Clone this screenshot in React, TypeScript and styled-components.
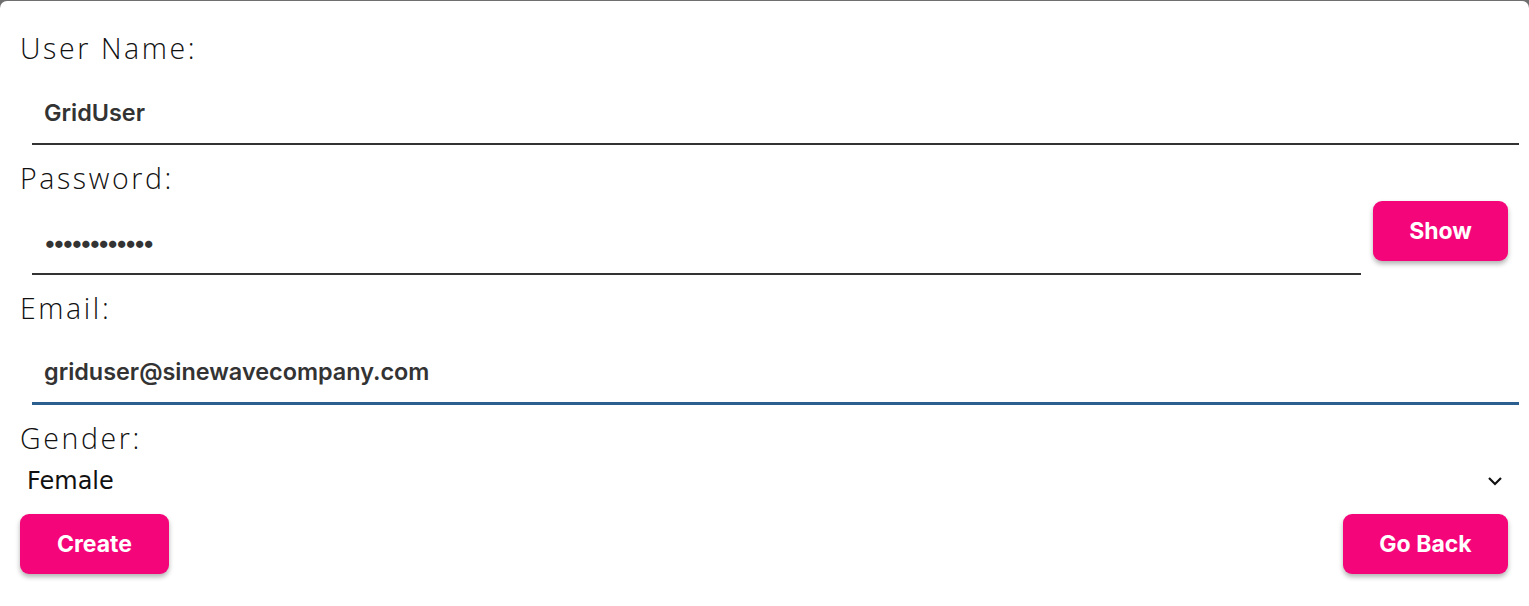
import React, { useState } from "react";
import { styled, createGlobalStyle } from "styled-components";

const GlobalStyle = createGlobalStyle`
  html, body {
    margin: 0;
    padding: 0;
    background: #6f6f6f;
  }
  #root {
    min-height: 100vh;
    display: flex;
    flex-direction: column;
  }
`;

const Card = styled.form`
  flex: 1;
  margin-top: 1px;
  background: #fff;
  border-radius: 7px 7px 0 0;
  padding: 28px 10px 0 20px;
  display: flex;
  flex-direction: column;
`;

const Field = styled.div`
  display: flex;
  flex-direction: column;
  height: 130px;
`;

const Label = styled.label`
  font-family: "Open Sans", sans-serif;
  font-weight: 300;
  font-size: 28.5px;
  line-height: 38px;
  letter-spacing: 2.6px;
  color: #111;
`;

const InputRow = styled.div`
  display: flex;
  align-items: flex-start;
  gap: 12px;
  margin-top: 8px;
`;

const TextInput = styled.input<{ $focused?: boolean; $secret?: boolean }>`
  flex: 1;
  min-width: 0;
  margin-left: 12px;
  height: 70px;
  box-sizing: border-box;
  padding: 6px 12px 0;
  border: none;
  border-bottom: ${({ $focused }) => ($focused ? "3px solid #2a5f8f" : "2px solid #333")};
  outline: none;
  background: transparent;
  font-family: Inter, sans-serif;
  font-weight: 600;
  font-size: 23.4px;
  letter-spacing: ${({ $secret }) => ($secret ? "-2.8px" : "0")};
  color: #333;
`;

const Button = styled.button<{ $width: number }>`
  background: #f5057a;
  color: #fff;
  border: none;
  border-radius: 9px;
  height: 60px;
  width: ${({ $width }) => $width}px;
  padding: 0;
  font-family: Inter, sans-serif;
  font-weight: 700;
  font-size: 23px;
  box-shadow: 0 3px 5px rgba(0, 0, 0, 0.3);
  cursor: pointer;
`;

const SideButton = styled(Button)`
  margin-top: -4px;
  margin-right: 11px;
`;

const SelectField = styled.div`
  display: flex;
  flex-direction: column;
`;

const SelectBox = styled.div`
  display: flex;
  align-items: center;
  justify-content: space-between;
  height: 40px;
  padding: 8px 16px 0 7px;
  box-sizing: border-box;
  font-family: "DejaVu Sans", sans-serif;
  font-size: 24px;
  color: #111;
`;

const Actions = styled.div`
  display: flex;
  justify-content: space-between;
  margin-top: 17px;
  padding-right: 11px;
`;

const Chevron = () => (
  <svg width="16" height="10" viewBox="0 0 16 10">
    <path d="M2 2 L8 8 L14 2" fill="none" stroke="#111" strokeWidth="2.2" />
  </svg>
);

const App = () => {
  const [show, setShow] = useState(false);
  return (
    <>
      <GlobalStyle />
      <Card onSubmit={(e) => e.preventDefault()}>
        <Field>
          <Label>User Name:</Label>
          <InputRow>
            <TextInput defaultValue="GridUser" />
          </InputRow>
        </Field>
        <Field>
          <Label>Password:</Label>
          <InputRow>
            <TextInput
              $secret={!show}
              type={show ? "text" : "password"}
              defaultValue="gridpassword"
            />
            <SideButton $width={135} type="button" onClick={() => setShow(!show)}>
              Show
            </SideButton>
          </InputRow>
        </Field>
        <Field>
          <Label>Email:</Label>
          <InputRow>
            <TextInput $focused defaultValue="griduser@sinewavecompany.com" />
          </InputRow>
        </Field>
        <SelectField>
          <Label>Gender:</Label>
          <SelectBox>
            <span>Female</span>
            <Chevron />
          </SelectBox>
        </SelectField>
        <Actions>
          <Button $width={149} type="button">Create</Button>
          <Button $width={165} type="button">Go Back</Button>
        </Actions>
      </Card>
    </>
  );
};

export default App;
